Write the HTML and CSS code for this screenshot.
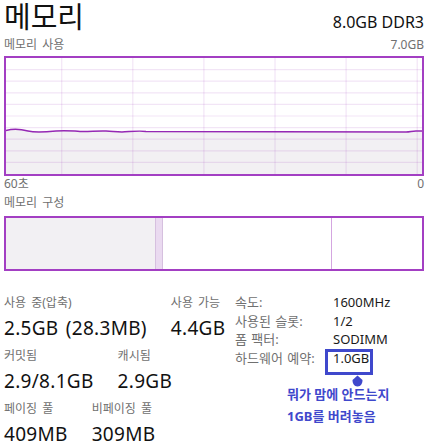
FILE: index.html
```html
<!DOCTYPE html>
<html lang="ko">
<head>
    <meta charset="UTF-8">
    <title>메모리</title>
    <link rel="stylesheet" href="styles.css">
</head>
<body>
    <div class="header">
        <div class="title">메모리</div>
        <div class="spec">8.0GB DDR3</div>
    </div>

    <div class="caption caption-top">
        <span>메모리 사용</span>
        <span>7.0GB</span>
    </div>
    <div class="graph">
        <svg width="416" height="116" viewBox="0 0 416 116">
            <path class="graph-fill" d="M0 72.5 C6 71 14 71 22 73 S40 74 50 73 S66 73 74 73.5 S92 72.5 100 73 S110 74 116 74 S132 72.3 140 73.5 L400 74 C404 74 406 73 410 73 L416 73 L416 116 L0 116 Z"/>
            <g class="grid">
                <line x1="0" y1="11.6" x2="416" y2="11.6"/>
                <line x1="0" y1="23.2" x2="416" y2="23.2"/>
                <line x1="0" y1="34.8" x2="416" y2="34.8"/>
                <line x1="0" y1="46.4" x2="416" y2="46.4"/>
                <line x1="0" y1="58" x2="416" y2="58"/>
                <line x1="0" y1="69.6" x2="416" y2="69.6"/>
                <line x1="0" y1="81.2" x2="416" y2="81.2"/>
                <line x1="0" y1="92.8" x2="416" y2="92.8"/>
                <line x1="0" y1="104.4" x2="416" y2="104.4"/>
                <line x1="55.7" y1="0" x2="55.7" y2="116"/>
                <line x1="126.8" y1="0" x2="126.8" y2="116"/>
                <line x1="197.9" y1="0" x2="197.9" y2="116"/>
                <line x1="269" y1="0" x2="269" y2="116"/>
                <line x1="340.1" y1="0" x2="340.1" y2="116"/>
                <line x1="411.2" y1="0" x2="411.2" y2="116"/>
            </g>
            <path class="graph-line" d="M0 72.5 C6 71 14 71 22 73 S40 74 50 73 S66 73 74 73.5 S92 72.5 100 73 S110 74 116 74 S132 72.3 140 73.5 L400 74 C404 74 406 73 410 73 L416 73"/>
        </svg>
    </div>
    <div class="caption caption-axis">
        <span>60초</span>
        <span>0</span>
    </div>

    <div class="caption caption-comp">
        <span>메모리 구성</span>
    </div>
    <div class="composition">
        <div class="seg-used"></div>
        <div class="seg-modified"></div>
        <div class="seg-standby"></div>
        <div class="seg-free"></div>
    </div>

    <div class="stats">
        <div class="stats-left">
            <div class="stat-row">
                <div class="stat">
                    <div class="stat-label">사용 중(압축)</div>
                    <div class="stat-value">2.5GB (28.3MB)</div>
                </div>
                <div class="stat">
                    <div class="stat-label">사용 가능</div>
                    <div class="stat-value">4.4GB</div>
                </div>
            </div>
            <div class="stat-row">
                <div class="stat">
                    <div class="stat-label">커밋됨</div>
                    <div class="stat-value">2.9/8.1GB</div>
                </div>
                <div class="stat">
                    <div class="stat-label">캐시됨</div>
                    <div class="stat-value">2.9GB</div>
                </div>
            </div>
            <div class="stat-row">
                <div class="stat">
                    <div class="stat-label">페이징 풀</div>
                    <div class="stat-value">409MB</div>
                </div>
                <div class="stat">
                    <div class="stat-label">비페이징 풀</div>
                    <div class="stat-value">309MB</div>
                </div>
            </div>
        </div>

        <div class="stats-right">
            <div class="info-row">
                <span class="info-label">속도:</span>
                <span class="info-value">1600MHz</span>
            </div>
            <div class="info-row">
                <span class="info-label">사용된 슬롯:</span>
                <span class="info-value">1/2</span>
            </div>
            <div class="info-row">
                <span class="info-label">폼 팩터:</span>
                <span class="info-value">SODIMM</span>
            </div>
            <div class="info-row">
                <span class="info-label">하드웨어 예약:</span>
                <span class="info-value marked">1.0GB</span>
            </div>
            <div class="note">
                <svg class="note-arrow" width="11" height="12" viewBox="0 0 11 12">
                    <path d="M5.5 0.5 L10.5 5 C10.5 8.5 9 11.5 5.5 11.5 C2 11.5 0.5 8.5 0.5 5 Z"/>
                </svg>
                <div class="note-text">뭐가 맘에 안드는지<br>1GB를 버려놓음</div>
            </div>
        </div>
    </div>
</body>
</html>
```

FILE: styles.css
```css
body {
    margin: 0;
    padding: 0 12px 0 4px;
    width: 420px;
    font-family: "Noto Sans", "Noto Sans CJK KR", sans-serif;
    color: #1a1a1a;
    background-color: #fff;
}
.header {
    display: flex;
    justify-content: space-between;
    align-items: baseline;
    height: 31px;
    padding-top: 3px;
    box-sizing: border-box;
}
.title {
    font-size: 29px;
    line-height: 28px;
    color: #111;
}
.spec {
    font-size: 16px;
    line-height: 20px;
    color: #111;
}
.caption {
    display: flex;
    justify-content: space-between;
    font-size: 12px;
    line-height: 16px;
    color: #707070;
    word-spacing: 2px;
}
.caption-top {
    margin-top: 6px;
    margin-bottom: 3px;
}
.caption-axis {
    margin-top: 0;
}
.caption-comp {
    margin-top: 3px;
    margin-bottom: 5px;
}
.graph {
    width: 420px;
    height: 120px;
    box-sizing: border-box;
    border: 2px solid #a33fc3;
}
.graph svg {
    display: block;
}
.graph-fill {
    fill: #f2f0f3;
}
.grid line {
    stroke: rgba(149, 40, 180, 0.12);
    stroke-width: 1.2;
}
.graph-line {
    fill: none;
    stroke: #9528b4;
    stroke-width: 1.5;
}
.composition {
    display: flex;
    width: 420px;
    height: 55px;
    box-sizing: border-box;
    border: 2px solid #a33fc3;
}
.seg-used {
    width: 149px;
    background-color: #f2f0f3;
}
.seg-modified {
    width: 6px;
    background-color: #eadaf0;
    border-left: 1px solid #d6c0df;
    border-right: 1px solid #d6c0df;
}
.seg-standby {
    width: 168px;
    border-right: 1px solid #d4a6e0;
}
.seg-free {
    flex: 1;
}
.stats {
    display: flex;
    margin-top: 22px;
}
.stats-left {
    width: 231px;
    padding-top: 2px;
}
.stat-row {
    display: flex;
    gap: 24px;
    margin-bottom: 8px;
}
.stat-label {
    font-size: 12px;
    line-height: 16px;
    color: #707070;
    margin-bottom: 5px;
    word-spacing: 2px;
}
.stat-value {
    font-size: 19px;
    line-height: 24px;
    color: #111;
    white-space: nowrap;
    letter-spacing: 0.3px;
    word-spacing: 2px;
}
.stats-right {
    flex: 1;
    font-size: 13px;
}
.info-row {
    display: flex;
    line-height: 18.5px;
    word-spacing: 1px;
}
.info-label {
    width: 98px;
    color: #707070;
}
.info-value {
    color: #1a1a1a;
}
.marked {
    position: relative;
}
.marked::after {
    content: "";
    position: absolute;
    left: -8px;
    top: 0;
    width: 48px;
    height: 26px;
    box-sizing: border-box;
    border: 3px solid #3f48cc;
}
.note {
    margin-top: 8px;
}
.note-arrow {
    display: block;
    margin-left: 117px;
    fill: #3f48cc;
}
.note-text {
    margin-top: -4px;
    padding-left: 52px;
    font-size: 13px;
    line-height: 22px;
    font-weight: bold;
    color: #3f48cc;
}
```
